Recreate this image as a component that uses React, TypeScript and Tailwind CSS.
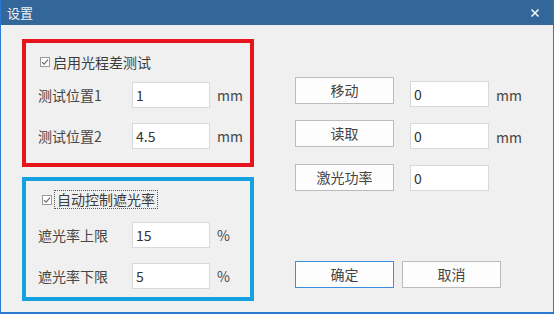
import React from "react";

const font = { fontFamily: '"Microsoft YaHei", "Noto Sans CJK SC", "Noto Sans", sans-serif' };

function CheckBox() {
  return (
    <span className="flex h-[10px] w-[10px] shrink-0 items-center justify-center border border-[#9a9a9a] bg-white">
      <svg width="8" height="8" viewBox="0 0 8 8">
        <path d="M1 4.2 L3.1 6.2 L7 1.6" fill="none" stroke="#666" strokeWidth="1.1" />
      </svg>
    </span>
  );
}

function TextBox({ value, className = "" }: { value: string; className?: string }) {
  return (
    <div
      className={`flex h-[26px] w-[78px] shrink-0 items-center border border-[#d9d9d9] bg-white pl-[3px] text-[14px] text-[#333] ${className}`}
    >
      {value}
    </div>
  );
}

function Button({ label, primary }: { label: string; primary?: boolean }) {
  return (
    <div
      className={`flex h-[27px] w-[99px] shrink-0 items-center justify-center bg-[#fdfdfd] text-[14px] text-[#444] border ${
        primary ? "border-[#3d8ee0]" : "border-[#bcbcbc]"
      }`}
    >
      {label}
    </div>
  );
}

function FieldRow({ label, value, unit, className = "" }: { label: string; value: string; unit: string; className?: string }) {
  return (
    <div className={`flex items-center ${className}`}>
      <span className="w-[94px] shrink-0 text-[14px] text-[#474747]">{label}</span>
      <TextBox value={value} />
      <span className="ml-[7px] text-[14px] text-[#474747]">{unit}</span>
    </div>
  );
}

export default function App() {
  return (
    <div className="h-[314px] w-[554px] bg-[#f0f0f0]" style={font}>
      <div className="flex h-full w-full flex-col border-x border-b-2 border-[#2b78d2]">
        {/* Title bar */}
        <div className="flex h-[25px] shrink-0 items-center justify-between bg-[#336699] pl-[6px] pr-[13px]">
          <span className="text-[13px] text-[#eef2f7]">设置</span>
          <svg width="10" height="10" viewBox="0 0 10 10">
            <path d="M1.5 1.5 L8.5 8.5 M8.5 1.5 L1.5 8.5" stroke="#f2f5f9" strokeWidth="1.6" />
          </svg>
        </div>

        <div className="flex pl-[21px] pt-[14px]">
          {/* Left column */}
          <div className="flex w-[232px] flex-col gap-[10px]">
            <div className="h-[128px] border-[4px] border-[#e8141c] pl-[12px] pt-[9px]">
              <div className="ml-[2px] flex h-[20px] items-center gap-[3px]">
                <CheckBox />
                <span className="text-[14px] text-[#3c3c3c]">启用光程差测试</span>
              </div>
              <FieldRow label="测试位置1" value="1" unit="mm" className="mt-[10px]" />
              <FieldRow label="测试位置2" value="4.5" unit="mm" className="mt-[15px]" />
            </div>

            <div className="h-[124px] border-[4px] border-[#15a0e0] pl-[12px] pt-[9px]">
              <div className="ml-[4px] flex h-[19px] items-center gap-[2px]">
                <CheckBox />
                <span className="flex h-[19px] items-center border border-dotted border-[#555] px-[2px] text-[14px] text-[#3c3c3c]">
                  自动控制遮光率
                </span>
              </div>
              <FieldRow label="遮光率上限" value="15" unit="%" className="mt-[13px]" />
              <FieldRow label="遮光率下限" value="5" unit="%" className="mt-[15px]" />
            </div>
          </div>

          {/* Right column */}
          <div className="ml-[41px] flex flex-col pt-[38px]">
            <div className="flex h-[27px] items-start gap-[16px]">
              <Button label="移动" />
              <TextBox value="0" className="mt-[4px] w-[79px]" />
              <span className="mt-[8px] -ml-[9px] text-[14px] text-[#474747]">mm</span>
            </div>
            <div className="mt-[16px] flex h-[27px] items-start gap-[16px]">
              <Button label="读取" />
              <TextBox value="0" className="mt-[3px] w-[79px]" />
              <span className="mt-[7px] -ml-[9px] text-[14px] text-[#474747]">mm</span>
            </div>
            <div className="mt-[17px] flex h-[27px] items-start gap-[16px]">
              <Button label="激光功率" />
              <TextBox value="0" className="mt-[1px] w-[79px]" />
            </div>
            <div className="mt-[70px] flex gap-[8px]">
              <Button label="确定" primary />
              <Button label="取消" />
            </div>
          </div>
        </div>
      </div>
    </div>
  );
}
